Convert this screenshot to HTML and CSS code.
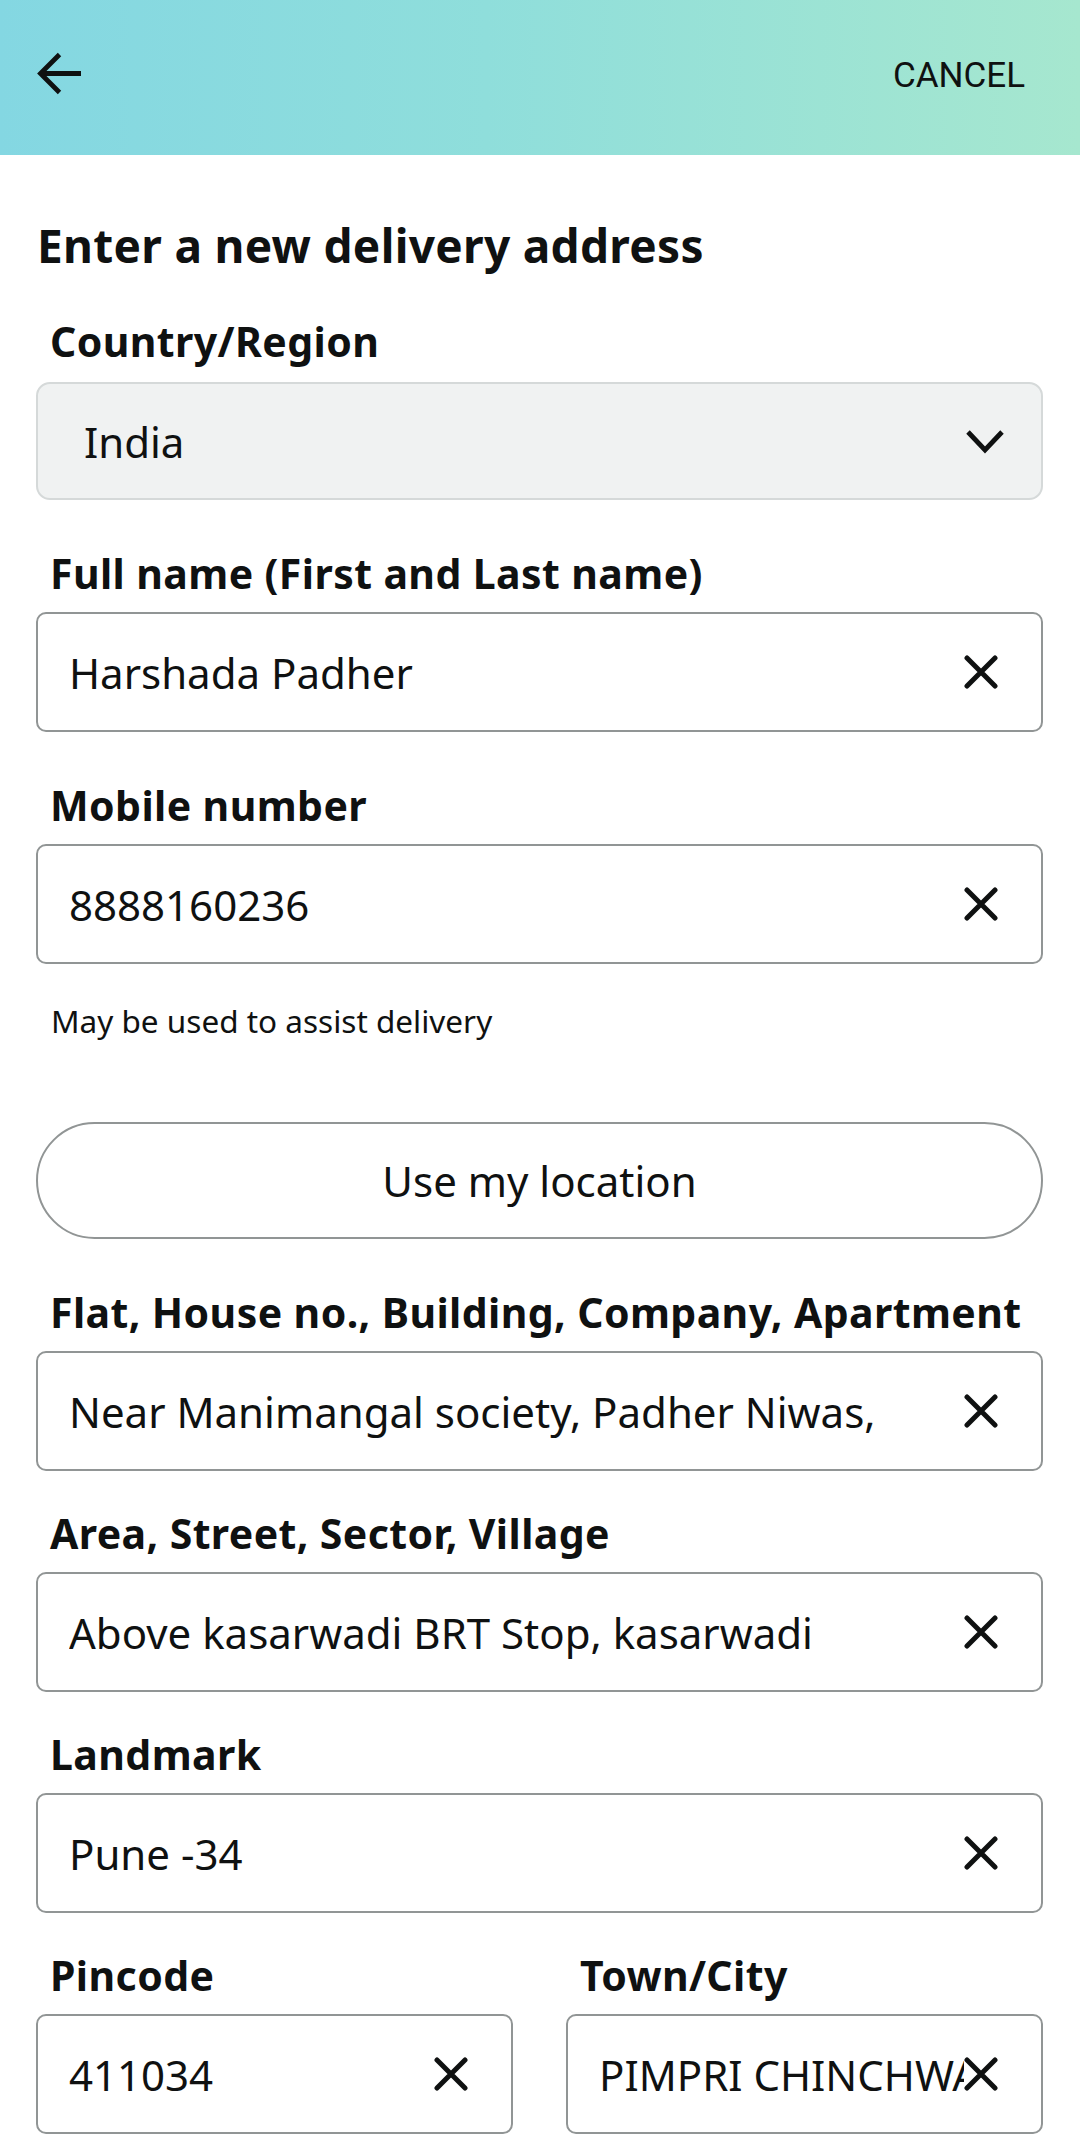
FILE: index.html
```html
<!DOCTYPE html>
<html lang="en">
<head>
<meta charset="utf-8">
<title>Enter a new delivery address</title>
<link rel="stylesheet" href="styles.css">
</head>
<body>
<header class="topbar">
  <svg class="back" width="60" height="60" viewBox="0 0 60 60" aria-hidden="true">
    <path d="M45 29.5H4.5M23.5 10.5L4.5 29.5L23.5 48.5" fill="none" stroke="#0f1111" stroke-width="4.8" stroke-linecap="butt" stroke-linejoin="miter"/>
  </svg>
  <span class="cancel">CANCEL</span>
</header>

<main class="form">
  <h1 class="title">Enter a new delivery address</h1>

  <div class="field field-first">
    <div class="label">Country/Region</div>
    <div class="select">
      <span class="select-text">India</span>
      <svg class="chev" width="40" height="26" viewBox="0 0 40 26" aria-hidden="true">
        <path d="M3 4L20 22L37 4" fill="none" stroke="#0f1111" stroke-width="4.8"/>
      </svg>
    </div>
  </div>

  <div class="field field-wide">
    <div class="label">Full name (First and Last name)</div>
    <div class="input">
      <span class="input-text">Harshada Padher</span>
      <svg class="clear" width="34" height="34" viewBox="0 0 34 34" aria-hidden="true"><path d="M3 3L31 31M31 3L3 31" stroke="#0f1111" stroke-width="5" stroke-linecap="round"/></svg>
    </div>
  </div>

  <div class="field field-wide">
    <div class="label">Mobile number</div>
    <div class="input">
      <span class="input-text">8888160236</span>
      <svg class="clear" width="34" height="34" viewBox="0 0 34 34" aria-hidden="true"><path d="M3 3L31 31M31 3L3 31" stroke="#0f1111" stroke-width="5" stroke-linecap="round"/></svg>
    </div>
  </div>

  <p class="hint">May be used to assist delivery</p>

  <div class="loc-btn">Use my location</div>

  <div class="field field-after-btn">
    <div class="label">Flat, House no., Building, Company, Apartment</div>
    <div class="input">
      <span class="input-text">Near Manimangal society, Padher Niwas,</span>
      <svg class="clear" width="34" height="34" viewBox="0 0 34 34" aria-hidden="true"><path d="M3 3L31 31M31 3L3 31" stroke="#0f1111" stroke-width="5" stroke-linecap="round"/></svg>
    </div>
  </div>

  <div class="field">
    <div class="label">Area, Street, Sector, Village</div>
    <div class="input">
      <span class="input-text">Above kasarwadi BRT Stop, kasarwadi</span>
      <svg class="clear" width="34" height="34" viewBox="0 0 34 34" aria-hidden="true"><path d="M3 3L31 31M31 3L3 31" stroke="#0f1111" stroke-width="5" stroke-linecap="round"/></svg>
    </div>
  </div>

  <div class="field">
    <div class="label">Landmark</div>
    <div class="input">
      <span class="input-text">Pune -34</span>
      <svg class="clear" width="34" height="34" viewBox="0 0 34 34" aria-hidden="true"><path d="M3 3L31 31M31 3L3 31" stroke="#0f1111" stroke-width="5" stroke-linecap="round"/></svg>
    </div>
  </div>

  <div class="row">
    <div class="field">
      <div class="label">Pincode</div>
      <div class="input">
        <span class="input-text">411034</span>
        <svg class="clear" width="34" height="34" viewBox="0 0 34 34" aria-hidden="true"><path d="M3 3L31 31M31 3L3 31" stroke="#0f1111" stroke-width="5" stroke-linecap="round"/></svg>
      </div>
    </div>
    <div class="field">
      <div class="label label-city">Town/City</div>
      <div class="input">
        <span class="input-text">PIMPRI CHINCHWAD</span>
        <svg class="clear" width="34" height="34" viewBox="0 0 34 34" aria-hidden="true"><path d="M3 3L31 31M31 3L3 31" stroke="#0f1111" stroke-width="5" stroke-linecap="round"/></svg>
      </div>
    </div>
  </div>
</main>
</body>
</html>
```

FILE: styles.css
```css
* {
  box-sizing: border-box;
}

html, body {
  margin: 0;
  padding: 0;
  background: #ffffff;
}

body {
  width: 1080px;
  height: 2149px;
  overflow: hidden;
  font-family: "Noto Sans", "Open Sans", sans-serif;
  color: #0f1111;
}

.topbar {
  height: 155px;
  display: flex;
  align-items: center;
  justify-content: space-between;
  padding: 0 55px 0 36px;
  background: linear-gradient(to right, #84d7e2 0%, #8fdedb 45%, #a6e7cf 100%);
}

.back {
  display: block;
  margin-top: -8px;
}

.cancel {
  font-family: Roboto, "Noto Sans", sans-serif;
  font-size: 35px;
  color: #0f1111;
  margin-top: -4px;
}

.form {
  padding: 0 37px 0 36px;
}

.title {
  margin: 62px 0 0 1px;
  font-size: 46px;
  line-height: 56px;
  font-weight: 700;
  letter-spacing: 0.3px;
}

.field {
  margin-top: 38px;
}

.field-first {
  margin-top: 44px;
}

.field-wide {
  margin-top: 49px;
}

.field-after-btn {
  margin-top: 49px;
}

.label {
  font-size: 41px;
  line-height: 48px;
  font-weight: 700;
  letter-spacing: 0.4px;
  padding-left: 14px;
  white-space: nowrap;
}

.select {
  margin-top: 17px;
  height: 118px;
  display: flex;
  align-items: center;
  padding: 0 36px 0 46px;
  background: #f0f2f2;
  border: 2px solid #d5d9d9;
  border-radius: 14px;
}

.select-text {
  flex: 1;
  font-size: 42px;
}

.chev {
  display: block;
}

.input {
  margin-top: 15px;
  height: 120px;
  display: flex;
  align-items: center;
  padding: 0 43px 0 31px;
  border: 2px solid #919595;
  border-radius: 10px;
}

.input-text {
  flex: 1;
  min-width: 0;
  font-size: 42px;
  white-space: nowrap;
  overflow: hidden;
}

.clear {
  display: block;
  flex: none;
}

.hint {
  margin: 37px 0 0 15px;
  font-size: 31.5px;
  line-height: 40px;
}

.loc-btn {
  margin-top: 81px;
  height: 117px;
  display: flex;
  align-items: center;
  justify-content: center;
  border: 2px solid #919595;
  border-radius: 60px;
  font-size: 42px;
}

.row {
  display: grid;
  grid-template-columns: 477px 477px;
  column-gap: 53px;
}

.label-city {
  padding-left: 14px;
}
```
